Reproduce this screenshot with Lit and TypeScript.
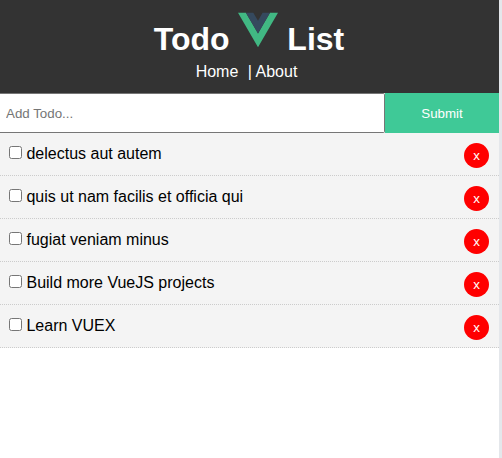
import { LitElement, html, css } from "lit";
import { customElement, property, state } from "lit/decorators.js";

@customElement("todo-header")
class TodoHeader extends LitElement {
  static styles = css`
    :host { display: block; }
    .header {
      box-sizing: border-box;
      height: 93px;
      padding: 10px 11px 10px 10px;
      background: #333;
      color: #fff;
      text-align: center;
    }
    .title {
      margin: 0;
      height: 51px;
      font-size: 32px;
      font-weight: bold;
      line-height: 44.8px;
    }
    .logo { width: 40px; height: 40px; vertical-align: baseline; }
    .nav { line-height: 22.4px; }
    .link { color: #fff; padding-right: 5px; text-decoration: none; }
  `;
  render() {
    return html`<header class="header">
      <h1 class="title">Todo <svg class="logo" viewBox="0 0 400 400"><path fill="#41b883" d="M0 27l200 346L400 27h-80L200 234 79 27z"/><path fill="#35495e" d="M79 27l121 208L320 27h-74l-46 80-47-80z"/></svg> List</h1>
      <nav class="nav"><a class="link" href="#">Home</a> | <a class="link" href="#">About</a></nav>
    </header>`;
  }
}

@customElement("add-todo")
class AddTodo extends LitElement {
  static styles = css`
    :host { display: block; }
    .form { display: flex; height: 40px; margin: 0; background: #fff; }
    .field {
      box-sizing: border-box;
      width: 385px;
      border: 1px solid #767676;
      border-left: 0;
      border-radius: 0 2px 2px 0;
      margin: 0;
      padding: 1px 6px;
      background: #fff;
      font: 13.3333px "Liberation Sans", Arial, sans-serif;
    }
    .field::placeholder { color: #757575; }
    .submit {
      flex: 1;
      border: 0;
      padding: 1px 6px;
      background: #3fc997;
      color: #fff;
      font: 13.3333px "Liberation Sans", Arial, sans-serif;
    }
  `;
  render() {
    return html`<form class="form" @submit=${(e: Event) => e.preventDefault()}>
      <input class="field" type="text" placeholder="Add Todo..." />
      <button class="submit">Submit</button>
    </form>`;
  }
}

@customElement("todo-item")
class TodoItem extends LitElement {
  @property() label = "";
  static styles = css`
    :host { display: block; }
    .item {
      box-sizing: border-box;
      display: flex;
      justify-content: space-between;
      height: 43px;
      padding: 10px 10px 0 5px;
      background: #f4f4f4;
      border-bottom: 1px dotted #ccc;
      line-height: 22px;
    }
    .check { margin: 3px 0 3px 4px; }
    .del {
      width: 25px;
      height: 25px;
      border: 0;
      border-radius: 50%;
      padding: 0;
      background: #f00;
      color: #fff;
      font: 13.3333px "Liberation Sans", Arial, sans-serif;
    }
  `;
  render() {
    return html`<div class="item">
      <label><input class="check" type="checkbox" /> ${this.label}</label>
      <button class="del">x</button>
    </div>`;
  }
}

@customElement("app-root")
class AppRoot extends LitElement {
  @state() todos = [
    "delectus aut autem",
    "quis ut nam facilis et officia qui",
    "fugiat veniam minus",
    "Build more VueJS projects",
    "Learn VUEX",
  ];
  static styles = css`
    :host {
      box-sizing: border-box;
      display: block;
      height: 100vh;
      background: #fff;
      border-right: 3px solid #e4e7eb;
      font: 16px/1.4 "Liberation Sans", Arial, sans-serif;
      color: #000;
      overflow: hidden;
    }
  `;
  render() {
    return html`<todo-header></todo-header>
      <add-todo></add-todo>
      ${this.todos.map((t) => html`<todo-item .label=${t}></todo-item>`)}`;
  }
}
